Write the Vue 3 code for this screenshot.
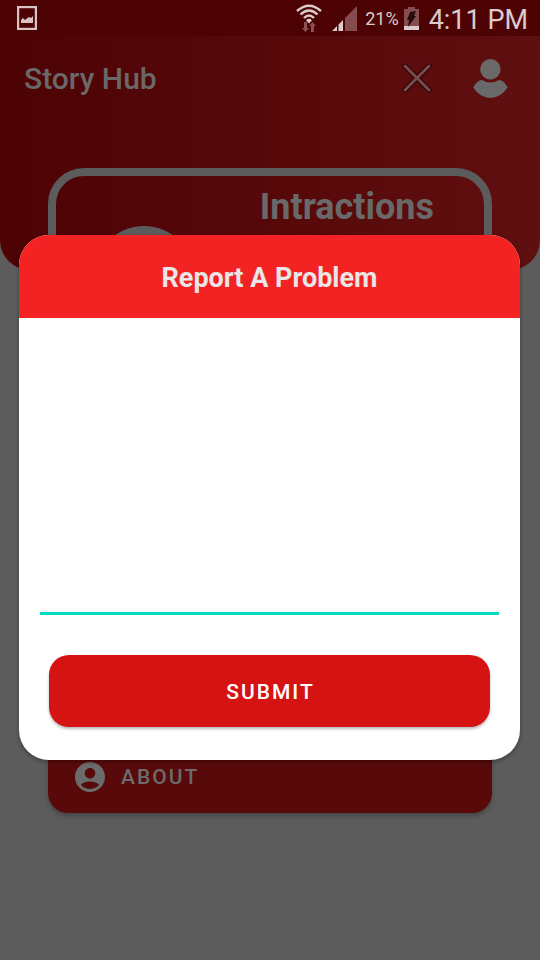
<script setup>
import { ref } from 'vue'

const report = ref('')
</script>

<template>
  <div class="screen">
    <div class="status">
      <svg class="shot" width="20" height="24" viewBox="0 0 20 24" aria-hidden="true">
        <rect x="1" y="1" width="18" height="22" fill="none" stroke="#d8c4c5" stroke-width="2.400" />
        <path d="M4 17v-3l2-2 2 2 4-3 2 1 2-2v7z" fill="#d8c4c5" />
      </svg>
      <svg class="wifi" width="26" height="28" viewBox="0 0 26 28" aria-hidden="true">
        <g fill="none" stroke="#dbcbcc" stroke-width="2.4">
          <path d="M1 7Q13-3.500 25 7" />
          <path d="M4.500 10.500Q13 2.500 21.500 10.500" />
          <path d="M8 14Q13 9 18 14" />
        </g>
        <path d="M10 16.200Q13 13.500 16 16.200L13 19.500z" fill="#dbcbcc" />
        <path d="M8 18h3v6h2l-3.500 4L6 24h2z M15 28v-6h-2l3.500-4 3.500 4h-2v6z" fill="#8a5052" />
      </svg>
      <svg class="signal" width="25" height="25" viewBox="0 0 25 25" aria-hidden="true">
        <path d="M13 25V12L25 0v25z" fill="#854d4f" />
        <path d="M0 25l5-5v5z M6.500 25v-6.500L11 14v11z" fill="#dbcbcc" />
      </svg>
      <span class="percent">21%</span>
      <svg class="battery" width="15" height="23" viewBox="0 0 15 23" aria-hidden="true">
        <path d="M0 2h4V0h7v2h4v17H0z" fill="#854d4f" />
        <path d="M0 19h15v4H0z" fill="#dbcbcc" />
        <path d="M6 5l6-1-2 5h2L4 20l1-7H3z" fill="#260b0c" />
      </svg>
      <time class="clock">4:11 PM</time>
    </div>

    <header class="hero">
      <h1>Story Hub</h1>
      <button class="icon" type="button" aria-label="Close">
        <svg width="30" height="30" viewBox="0 0 30 30" aria-hidden="true">
          <path d="M3 3l24 24M27 3L3 27" stroke="#360506" stroke-width="5.400" stroke-linecap="round" />
          <path d="M3 3l24 24M27 3L3 27" stroke="#754e50" stroke-width="2.800" stroke-linecap="round" />
        </svg>
      </button>
      <button class="icon" type="button" aria-label="Profile">
        <svg width="36" height="40" viewBox="0 0 36 40" aria-hidden="true">
          <circle cx="18.400" cy="11.300" r="10.200" fill="#696969" />
          <path d="M10 22Q18.400 27 27 22Q32 22 35.600 29.500Q28.500 40 18.400 40T1.200 29.500Q5 22 10 22z" fill="#696969" />
        </svg>
      </button>
    </header>

    <main class="content">
      <section class="card">
        <div class="avatar"></div>
        <h2>Intractions</h2>
      </section>
      <button class="about" type="button">
        <svg width="36" height="36" viewBox="0 0 24 24" aria-hidden="true">
          <path
            fill="#6b6b6b"
            d="M12 2C6.480 2 2 6.480 2 12s4.480 10 10 10 10-4.480 10-10S17.520 2 12 2zm0 4c1.930 0 3.500 1.570 3.500 3.500S13.930 13 12 13s-3.500-1.570-3.500-3.500S10.070 6 12 6zm0 14c-2.030 0-4.430-.82-6.140-2.880C7.550 15.800 9.680 15 12 15s4.450.8 6.140 2.120C16.430 19.180 14.030 20 12 20z"
          />
        </svg>
        <span>ABOUT</span>
      </button>
    </main>

    <div class="overlay">
      <form class="dialog" role="dialog" aria-labelledby="report-title" @submit.prevent>
        <h2 id="report-title">Report A Problem</h2>
        <div class="fields">
          <textarea v-model="report" aria-labelledby="report-title"></textarea>
          <button class="submit" type="submit">SUBMIT</button>
        </div>
      </form>
    </div>
  </div>
</template>

<style>
body {
  background: #5c5c5c;
}
</style>

<style scoped>
* {
  box-sizing: border-box;
}

.screen {
  position: relative;
  display: flex;
  flex-direction: column;
  min-height: 100vh;
  background: #5c5c5c;
  font-family: Roboto, sans-serif;
}

h1,
h2 {
  margin: 0;
}

button {
  border: 0;
  font-family: inherit;
}

.status {
  display: flex;
  align-items: center;
  height: 36px;
  padding: 0 12px 0 17px;
  background: #4d0304;
  color: #dbcbcc;
}

.wifi {
  margin-left: auto;
  margin-right: 10px;
}

.signal {
  margin-right: 8px;
}

.percent {
  font-size: 18px;
  margin-right: 5px;
}

.battery {
  margin-right: 10px;
}

.clock {
  font-size: 27px;
  line-height: 36px;
  padding-top: 3px;
}

.hero {
  display: flex;
  align-items: flex-start;
  gap: 40px;
  height: 234px;
  padding: 22px 32px 0 24px;
  border-radius: 0 0 30px 30px;
  background: linear-gradient(90deg, #4d0203, #600f10);
}

.hero h1 {
  flex: 1;
  font-size: 30px;
  line-height: 42px;
  font-weight: 500;
  color: #696969;
}

.icon {
  display: flex;
  align-items: center;
  height: 40px;
  padding: 0;
  background: none;
}

.content {
  flex: 1;
  display: flex;
  flex-direction: column;
  justify-content: space-between;
  margin-top: -102px;
  padding: 0 48px 147px;
}

.card {
  display: flex;
  align-items: flex-start;
  padding: 0 50px 32px 37px;
  border: 8px solid #5c5c5c;
  border-radius: 36px;
}

.avatar {
  width: 102px;
  height: 102px;
  margin-top: 50px;
  border-radius: 50%;
  background: #5c5c5c;
}

.card h2 {
  flex: 1;
  padding-top: 9px;
  font-size: 36px;
  line-height: 44px;
  font-weight: 700;
  text-align: right;
  color: #696969;
}

.about {
  display: flex;
  align-items: center;
  gap: 13px;
  height: 72px;
  padding: 0 24px;
  border-radius: 20px;
  background: #580a0b;
  box-shadow: 0 3px 4px #00000040;
  color: #6b6b6b;
}

.about,
.submit {
  font-size: 21px;
  font-weight: 500;
  letter-spacing: 2px;
}

.overlay {
  position: absolute;
  inset: 35px 0 0;
  display: flex;
  align-items: center;
  padding: 0 20px 0 19px;
}

.dialog {
  flex: 1;
  overflow: hidden;
  border-radius: 30px;
  background: #fff;
  box-shadow: 0 2px 4px #00000050;
}

.dialog h2 {
  height: 83px;
  background: #f42323;
  color: #e8e6e6;
  font-size: 27px;
  line-height: 86px;
  font-weight: 700;
  text-align: center;
}

.fields {
  display: flex;
  flex-direction: column;
  gap: 40px;
  padding: 21px 21px 33px;
}

textarea {
  height: 276px;
  padding: 6px;
  border: 0;
  border-bottom: 3px solid #03dac5;
  outline: none;
  resize: none;
  background: transparent;
  font: 27px Roboto, sans-serif;
}

.submit {
  height: 72px;
  margin: 0 9px;
  padding: 2px 0 0 2px;
  border-radius: 20px;
  background: #d61313;
  box-shadow: 0 2px 3px #00000048;
  color: #fff;
}
</style>
